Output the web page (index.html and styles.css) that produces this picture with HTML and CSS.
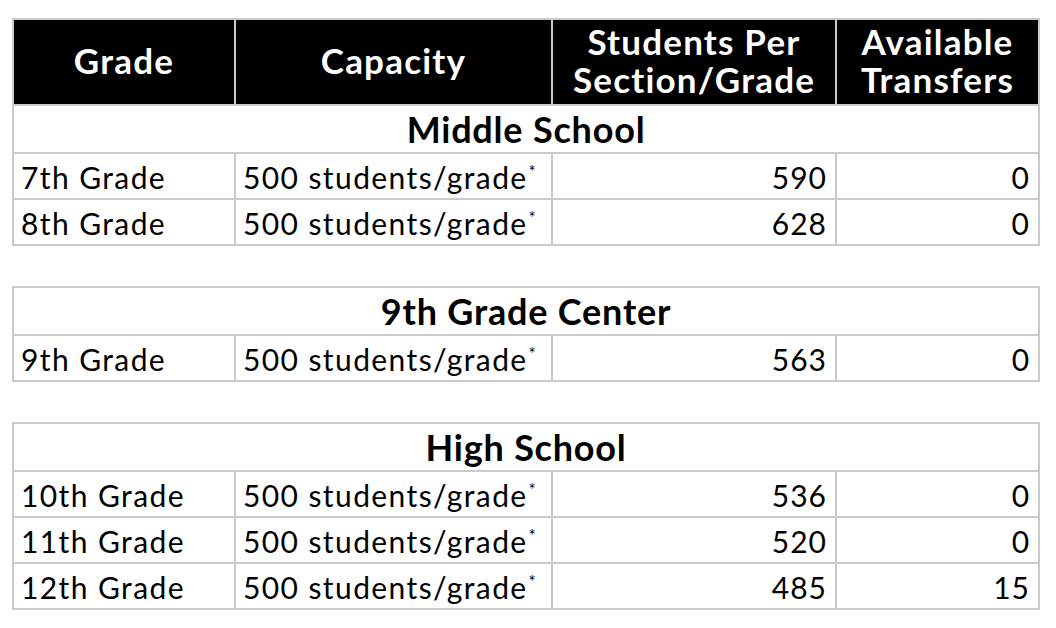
FILE: index.html
```html
<!DOCTYPE html>
<html lang="en">
<head>
<meta charset="utf-8">
<title>Transfer Capacity</title>
<link rel="stylesheet" href="styles.css">
</head>
<body>
<div class="page">
  <table class="cap">
    <colgroup><col class="c1"><col class="c2"><col class="c3"><col class="c4"></colgroup>
    <thead>
      <tr class="head">
        <th>Grade</th>
        <th>Capacity</th>
        <th>Students Per<br>Section/Grade</th>
        <th>Available<br>Transfers</th>
      </tr>
    </thead>
    <tbody>
      <tr class="section"><td colspan="4">Middle School</td></tr>
      <tr class="row"><td>7th Grade</td><td>500 students/grade<sup>*</sup></td><td class="num">590</td><td class="num">0</td></tr>
      <tr class="row"><td>8th Grade</td><td>500 students/grade<sup>*</sup></td><td class="num">628</td><td class="num">0</td></tr>
    </tbody>
  </table>

  <table class="cap">
    <colgroup><col class="c1"><col class="c2"><col class="c3"><col class="c4"></colgroup>
    <tbody>
      <tr class="section"><td colspan="4">9th Grade Center</td></tr>
      <tr class="row"><td>9th Grade</td><td>500 students/grade<sup>*</sup></td><td class="num">563</td><td class="num">0</td></tr>
    </tbody>
  </table>

  <table class="cap">
    <colgroup><col class="c1"><col class="c2"><col class="c3"><col class="c4"></colgroup>
    <tbody>
      <tr class="section"><td colspan="4">High School</td></tr>
      <tr class="row"><td>10th Grade</td><td>500 students/grade<sup>*</sup></td><td class="num">536</td><td class="num">0</td></tr>
      <tr class="row"><td>11th Grade</td><td>500 students/grade<sup>*</sup></td><td class="num">520</td><td class="num">0</td></tr>
      <tr class="row"><td>12th Grade</td><td>500 students/grade<sup>*</sup></td><td class="num">485</td><td class="num">15</td></tr>
    </tbody>
  </table>
</div>
</body>
</html>
```

FILE: styles.css
```css
html, body {
  margin: 0;
  padding: 0;
  background: #ffffff;
}

.page {
  padding: 18px 0 0 12px;
  display: flex;
  flex-direction: column;
  gap: 40px;
  font-family: Lato, "Liberation Sans", sans-serif;
  color: #000;
}

.cap {
  border-collapse: collapse;
  table-layout: fixed;
  width: 1026px;
  border: 2px solid #cacaca;
}

.c1 { width: 222px; }
.c2 { width: 317px; }
.c3 { width: 284px; }
.c4 { width: 203px; }

.cap th,
.cap td {
  border: 2px solid #cacaca;
  padding: 0;
  white-space: nowrap;
  overflow: hidden;
  vertical-align: middle;
}

.head { height: 86px; }
.section { height: 48px; }
.row { height: 46px; }

.head th {
  background: #000;
  color: #fff;
  font-weight: 700;
  font-size: 35px;
  line-height: 38px;
  padding: 0 2px 4px;
  text-align: center;
  letter-spacing: 1.2px;
}

.section td {
  text-align: center;
  font-weight: 700;
  font-size: 36px;
  line-height: 40px;
  letter-spacing: 0.8px;
}

.row td {
  font-size: 30px;
  line-height: 36px;
  padding: 2px 0 0 7px;
  letter-spacing: 1.4px;
}

.row td.num {
  text-align: right;
  padding-right: 8px;
  letter-spacing: 1px;
}

sup {
  font-size: 17px;
  line-height: 0;
  vertical-align: 11px;
  margin-left: 1px;
  letter-spacing: 0;
}
```
